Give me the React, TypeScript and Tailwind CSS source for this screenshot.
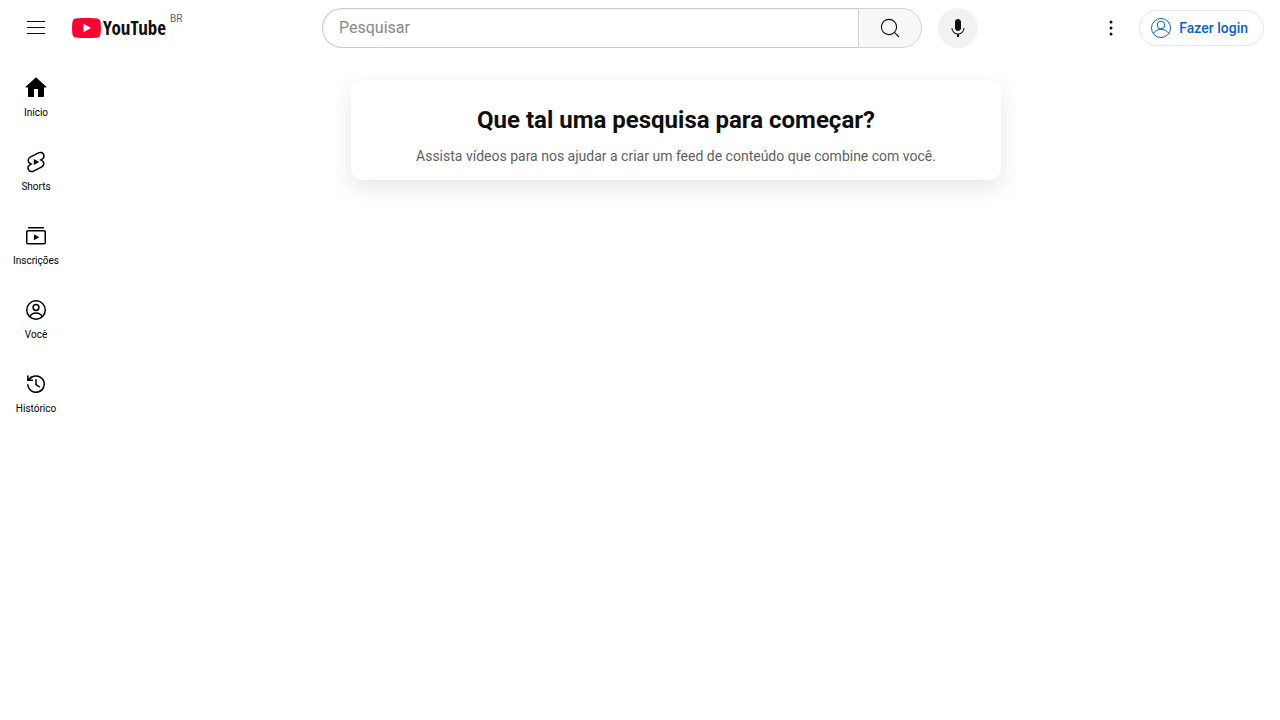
import type { ReactNode } from "react";

function MenuIcon() {
  return (
    <svg viewBox="0 0 24 24" className="size-6" fill="currentColor" aria-hidden="true">
      <path d="M21 6H3V5h18v1zm0 5H3v1h18v-1zm0 6H3v1h18v-1z" />
    </svg>
  );
}

function LogoMark() {
  return (
    <svg viewBox="0 0 29 20" className="h-5 w-[29px]" aria-hidden="true">
      <path
        fill="#ff0033"
        d="M14.5 0S5.500 0 3.300.6C2 .95 1.050 1.900.7 3.100.1 5.400 0 10 0 10s.1 4.600.7 6.900c.35 1.200 1.300 2.150 2.600 2.500 2.200.6 11.200.6 11.200.6s9 0 11.200-.6c1.300-.35 2.250-1.300 2.600-2.500.6-2.300.7-6.900.7-6.900s-.1-4.600-.7-6.900C27.950 1.900 27 .95 25.700.6 23.500 0 14.500 0 14.500 0z"
      />
      <path fill="#fff" d="M11.500 5.700v8.600L19 10z" />
    </svg>
  );
}

function SearchIcon() {
  return (
    <svg viewBox="0 0 24 24" className="size-6" fill="none" stroke="currentColor" strokeWidth="1.1" aria-hidden="true">
      <circle cx="11" cy="11" r="7.6" />
      <path d="M16.4 16.4 21 21" />
    </svg>
  );
}

function MicIcon() {
  return (
    <svg viewBox="0 0 24 24" className="size-6" fill="currentColor" aria-hidden="true">
      <path d="M12 3C10.34 3 9 4.37 9 6.07v5.86C9 13.63 10.34 15 12 15s3-1.37 3-3.07V6.07C15 4.37 13.66 3 12 3zm6.5 9h-1c0 3.03-2.47 5.5-5.5 5.5S6.5 15.03 6.5 12h-1c0 3.24 2.39 5.93 5.5 6.41V21h2v-2.59c3.11-.48 5.5-3.17 5.5-6.41z" />
    </svg>
  );
}

function MoreIcon() {
  return (
    <svg viewBox="0 0 24 24" className="size-6" fill="currentColor" aria-hidden="true">
      <circle cx="12" cy="6" r="1.5" />
      <circle cx="12" cy="12" r="1.5" />
      <circle cx="12" cy="18" r="1.5" />
    </svg>
  );
}

function AccountIcon() {
  return (
    <svg viewBox="0 0 24 24" className="size-6" fill="none" stroke="currentColor" aria-hidden="true">
      <circle cx="12" cy="12" r="9.5" />
      <circle cx="12" cy="9" r="3.8" />
      <path d="M4.2 17.3C6.300 14.700 9 13.300 12 13.300s5.700 1.400 7.800 4" />
    </svg>
  );
}

function HomeIcon() {
  return (
    <svg viewBox="0 0 24 24" className="size-6" fill="currentColor" aria-hidden="true">
      <path d="M12 1.300 1.700 10.800c-.3.300-.1.800.3.800h2V20c0 .6.400 1 1 1h5v-8h4v8h5c.6 0 1-.4 1-1v-8.400h2c.4 0 .6-.5.3-.8z" />
    </svg>
  );
}

function ShortsIcon() {
  return (
    <svg viewBox="0 0 24 24" className="size-6" fill="none" stroke="currentColor" strokeWidth="1.500" aria-hidden="true">
      <path d="M14.400 2.900C16.400 1.800 18.600 2.600 19.500 4.400 20.400 6.300 19.600 8.400 17.800 9.400L16.800 10 17.600 10.400C20.400 11.700 20.600 15.400 17.800 16.900L9.600 21.100C7.600 22.200 5.400 21.400 4.500 19.600 3.600 17.700 4.400 15.600 6.200 14.600L7.200 14 6.400 13.600C3.600 12.300 3.400 8.600 6.200 7.100z" />
      <path d="M9.800 8.900v6.200l5.400-3.100z" fill="currentColor" stroke="none" />
    </svg>
  );
}

function SubscriptionsIcon() {
  return (
    <svg viewBox="0 0 24 24" className="size-6" fill="none" stroke="currentColor" strokeWidth="1.500" aria-hidden="true">
      <path d="M4 3.750h16" />
      <rect x="2.750" y="6.750" width="18.500" height="13" rx="1" />
      <path d="M10 10.200v6l5.200-3z" fill="currentColor" stroke="none" />
    </svg>
  );
}

function YouIcon() {
  return (
    <svg viewBox="0 0 24 24" className="size-6" fill="none" stroke="currentColor" strokeWidth="1.500" aria-hidden="true">
      <circle cx="12" cy="12" r="9.250" />
      <circle cx="12" cy="9.500" r="2.900" />
      <path d="M5.800 18.600c1.200-2.200 3.500-3.500 6.200-3.500s5 1.300 6.200 3.500" />
    </svg>
  );
}

function HistoryIcon() {
  return (
    <svg viewBox="0 0 24 24" className="size-6" fill="none" stroke="currentColor" strokeWidth="1.500" aria-hidden="true">
      <path d="M3.800 12.200A8.200 8.200 0 1 0 5.200 7.500" />
      <path d="M3.800 3.400v4.800H9" />
      <path d="M4 8l3.600-3.300" />
      <path d="M12 7.200v5.300l3.900 2.600" />
    </svg>
  );
}

const navItems: { label: string; icon: ReactNode }[] = [
  { label: "Início", icon: <HomeIcon /> },
  { label: "Shorts", icon: <ShortsIcon /> },
  { label: "Inscrições", icon: <SubscriptionsIcon /> },
  { label: "Você", icon: <YouIcon /> },
  { label: "Histórico", icon: <HistoryIcon /> },
];

function Header() {
  return (
    <header className="flex h-14 items-center px-4">
      <div className="flex flex-1 items-center">
        <button type="button" aria-label="Guia" className="flex size-10 items-center justify-center rounded-full">
          <MenuIcon />
        </button>
        <a href="#inicio" className="flex items-start gap-1 pl-4">
          <span className="flex h-5 items-center gap-0.5">
            <LogoMark />
            <span className="font-['Noto_Sans_ExtraCondensed','Open_Sans_Condensed','Roboto_Condensed','Liberation_Sans_Narrow',sans-serif] text-[19px] leading-5 font-semibold">
              YouTube
            </span>
          </span>
          <span className="-mt-[5px] text-[10px] leading-3 text-[#606060]">BR</span>
        </a>
      </div>

      <div className="flex w-full max-w-[676px] shrink items-center gap-4 pl-5">
        <form role="search" className="flex h-10 flex-1" onSubmit={(e) => e.preventDefault()}>
          <input
            type="text"
            aria-label="Pesquisar"
            placeholder="Pesquisar"
            className="min-w-0 flex-1 rounded-l-full border border-r-0 border-[#cccccc] px-4 text-base shadow-[inset_0_1px_2px_#eeeeee] outline-none placeholder:text-[#888888]"
          />
          <button
            type="submit"
            aria-label="Pesquisar"
            className="flex w-16 items-center justify-center rounded-r-full border border-[#d3d3d3] bg-[#f8f8f8]"
          >
            <SearchIcon />
          </button>
        </form>
        <button
          type="button"
          aria-label="Pesquisar com sua voz"
          className="flex size-10 items-center justify-center rounded-full bg-[#f2f2f2]"
        >
          <MicIcon />
        </button>
      </div>

      <div className="flex flex-1 items-center justify-end gap-2">
        <button type="button" aria-label="Configurações" className="flex size-10 items-center justify-center rounded-full">
          <MoreIcon />
        </button>
        <a
          href="#login"
          className="flex h-9 items-center gap-1.5 rounded-full border border-[#e5e5e5] pr-[15px] pl-[9px] text-sm leading-[18px] font-medium whitespace-nowrap text-[#065fd4]"
        >
          <AccountIcon />
          Fazer login
        </a>
      </div>
    </header>
  );
}

export default function App() {
  return (
    <div className="min-h-screen bg-white font-[Roboto,sans-serif] text-[#0f0f0f]">
      <Header />
      <div className="flex">
        <nav className="w-[72px] shrink-0 px-1 pt-1">
          {navItems.map((item) => (
            <a
              key={item.label}
              href={`#${item.label}`}
              className="flex h-[74px] flex-col items-center gap-1.5 rounded-lg pt-4 text-[10px] leading-[14px] text-black"
            >
              {item.icon}
              {item.label}
            </a>
          ))}
        </nav>
        <main className="flex-1 px-6 pt-6">
          <section className="mx-auto max-w-[650px] rounded-xl bg-white px-4 pt-6 pb-3 text-center shadow-[0_8px_24px_rgba(0,0,0,0.1)]">
            <h1 className="text-2xl leading-8 font-bold">Que tal uma pesquisa para começar?</h1>
            <p className="mt-2.5 pb-0.5 text-sm leading-5 text-[#606060]">
              Assista vídeos para nos ajudar a criar um feed de conteúdo que combine com você.
            </p>
          </section>
        </main>
      </div>
    </div>
  );
}
